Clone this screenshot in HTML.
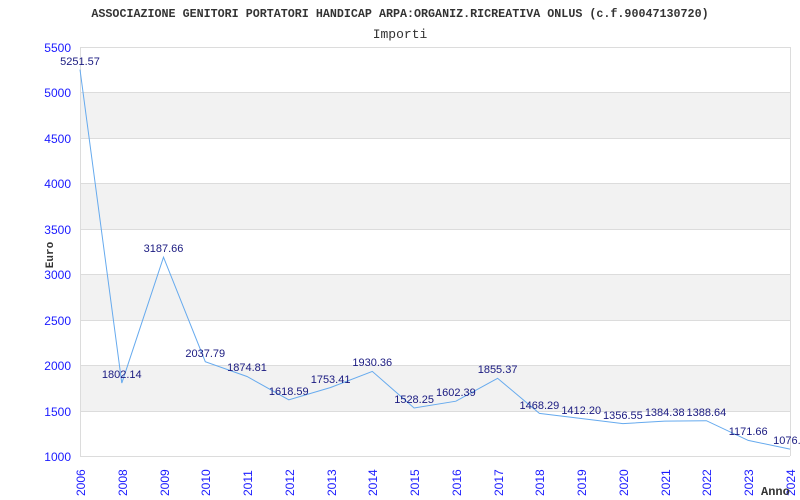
<!DOCTYPE html>
<html><head><meta charset="utf-8"><style>
html,body{margin:0;padding:0;background:#fff}
svg{display:block}
</style></head><body>
<svg width="800" height="500" xmlns="http://www.w3.org/2000/svg" font-family="Liberation Sans, sans-serif">
<rect width="800" height="500" fill="#fff"/>
<text x="400" y="17" text-anchor="middle" font-family="Liberation Mono, monospace" font-weight="bold" font-size="11.7" fill="#333">ASSOCIAZIONE GENITORI PORTATORI HANDICAP ARPA:ORGANIZ.RICREATIVA ONLUS (c.f.90047130720)</text>
<text x="400" y="38" text-anchor="middle" font-family="Liberation Mono, monospace" font-size="13" fill="#333">Importi</text>
<g fill="#f2f2f2">
<rect x="80" y="92" width="710" height="46"/>
<rect x="80" y="183" width="710" height="46"/>
<rect x="80" y="274" width="710" height="46"/>
<rect x="80" y="365" width="710" height="46"/>
</g>
<g stroke="#dcdcdc" stroke-width="1">
<line x1="80" y1="47.5" x2="790" y2="47.5"/>
<line x1="80" y1="92.5" x2="790" y2="92.5"/>
<line x1="80" y1="138.5" x2="790" y2="138.5"/>
<line x1="80" y1="183.5" x2="790" y2="183.5"/>
<line x1="80" y1="229.5" x2="790" y2="229.5"/>
<line x1="80" y1="274.5" x2="790" y2="274.5"/>
<line x1="80" y1="320.5" x2="790" y2="320.5"/>
<line x1="80" y1="365.5" x2="790" y2="365.5"/>
<line x1="80" y1="411.5" x2="790" y2="411.5"/>
<line x1="80" y1="456.5" x2="790" y2="456.5"/>
<line x1="80.5" y1="47" x2="80.5" y2="456"/>
<line x1="790.5" y1="47" x2="790.5" y2="456"/>
</g>
<g fill="#1a1aff" font-size="12" text-anchor="end">
<text x="71" y="52">5500</text><text x="71" y="97">5000</text><text x="71" y="143">4500</text>
<text x="71" y="188">4000</text><text x="71" y="234">3500</text><text x="71" y="279">3000</text>
<text x="71" y="325">2500</text><text x="71" y="370">2000</text><text x="71" y="416">1500</text>
<text x="71" y="461">1000</text>
</g>
<text transform="translate(53,255) rotate(-90)" text-anchor="middle" font-family="Liberation Mono, monospace" font-weight="bold" font-size="11" fill="#333">Euro</text>
<g fill="#1a1aff" font-size="12" text-anchor="start">
<text transform="translate(85,496) rotate(-90)">2006</text>
<text transform="translate(127,496) rotate(-90)">2008</text>
<text transform="translate(169,496) rotate(-90)">2009</text>
<text transform="translate(210,496) rotate(-90)">2010</text>
<text transform="translate(252,496) rotate(-90)">2011</text>
<text transform="translate(294,496) rotate(-90)">2012</text>
<text transform="translate(336,496) rotate(-90)">2013</text>
<text transform="translate(377,496) rotate(-90)">2014</text>
<text transform="translate(419,496) rotate(-90)">2015</text>
<text transform="translate(461,496) rotate(-90)">2016</text>
<text transform="translate(503,496) rotate(-90)">2017</text>
<text transform="translate(544,496) rotate(-90)">2018</text>
<text transform="translate(586,496) rotate(-90)">2019</text>
<text transform="translate(628,496) rotate(-90)">2020</text>
<text transform="translate(670,496) rotate(-90)">2021</text>
<text transform="translate(711,496) rotate(-90)">2022</text>
<text transform="translate(753,496) rotate(-90)">2023</text>
<text transform="translate(795,496) rotate(-90)">2024</text>
</g>
<text x="761" y="495" font-family="Liberation Mono, monospace" font-weight="bold" font-size="12" fill="#333">Anno</text>
<polyline fill="none" stroke="#66aaee" stroke-width="1" points="80,69.6 121.8,383.1 163.5,257.2 205.3,361.7 247,376.5 288.8,399.8 330.6,387.5 372.3,371.4 414.1,408 455.9,401.2 497.6,378.3 539.4,413.4 581.2,418.5 622.9,423.6 664.7,421.1 706.4,420.7 748.2,440.4 790,449.1"/>
<g fill="#1a1a80" font-size="11" text-anchor="middle">
<text x="80" y="65">5251.57</text>
<text x="121.8" y="378">1802.14</text>
<text x="163.5" y="252">3187.66</text>
<text x="205.3" y="357">2037.79</text>
<text x="247" y="371">1874.81</text>
<text x="288.8" y="395">1618.59</text>
<text x="330.6" y="383">1753.41</text>
<text x="372.3" y="366">1930.36</text>
<text x="414.1" y="403">1528.25</text>
<text x="455.9" y="396">1602.39</text>
<text x="497.6" y="373">1855.37</text>
<text x="539.4" y="409">1468.29</text>
<text x="581.2" y="414">1412.20</text>
<text x="622.9" y="419">1356.55</text>
<text x="664.7" y="416">1384.38</text>
<text x="706.4" y="416">1388.64</text>
<text x="748.2" y="435">1171.66</text>
<text x="790" y="444">1076.4</text>
</g>
</svg>
</body></html>
